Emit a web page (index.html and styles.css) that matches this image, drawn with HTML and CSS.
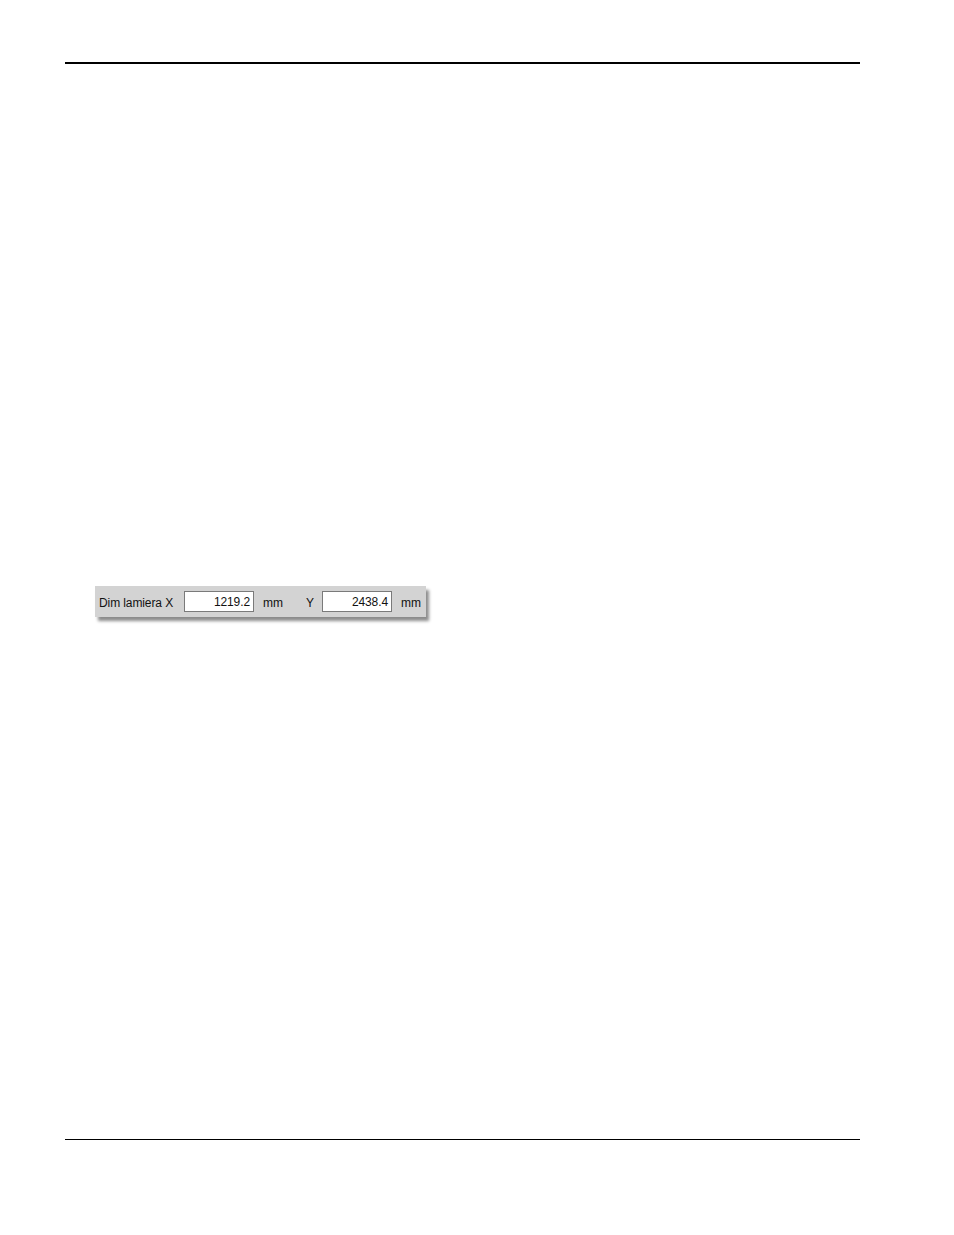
FILE: index.html
```html
<!DOCTYPE html>
<html>
<head>
  <meta charset="utf-8">
  <title>Dim lamiera</title>
  <link rel="stylesheet" href="styles.css">
</head>
<body>
  <div class="page">
    <div class="rule-top"></div>
    <div class="content">
      <div class="sheet-panel">
        <span class="lbl lbl-dim">Dim lamiera X</span>
        <span class="field">1219.2</span>
        <span class="lbl lbl-mm">mm</span>
        <span class="lbl lbl-y">Y</span>
        <span class="field">2438.4</span>
        <span class="lbl lbl-mm2">mm</span>
      </div>
    </div>
    <div class="rule-bottom"></div>
  </div>
</body>
</html>
```

FILE: styles.css
```css
body {
  margin: 0;
  background: #fff;
  font-family: "Liberation Sans", Arial, sans-serif;
}

.page {
  width: 795px;
  margin-left: 65px;
  padding-top: 62px;
}

.rule-top {
  height: 2px;
  background: #000;
}

.content {
  height: 1075px;
  padding-left: 30px;
  padding-top: 522px;
  box-sizing: border-box;
}

/* toolbar strip with the sheet size fields */
.sheet-panel {
  display: flex;
  align-items: center;
  width: 331px;
  height: 31px;
  box-sizing: border-box;
  padding-left: 4px;
  padding-top: 2px;
  background: #d3d3d3;
  box-shadow: 3px 4px 3px rgba(0, 0, 0, 0.45);
  font-size: 12px;
  letter-spacing: -0.1px;
  color: #111;
}

.lbl {
  white-space: nowrap;
}

.lbl-dim {
  width: 85px;
}

.field {
  width: 70px;
  height: 21px;
  margin-top: -2px;
  box-sizing: border-box;
  border: 1px solid #7a7a7a;
  background: #fff;
  text-align: right;
  padding-right: 3px;
  padding-top: 1px;
  line-height: 19px;
  color: #111;
}

.lbl-mm {
  margin-left: 9px;
  width: 43px;
}

.lbl-y {
  width: 16px;
}

.lbl-mm2 {
  margin-left: 9px;
}

.rule-bottom {
  height: 1px;
  background: #000;
}
```
